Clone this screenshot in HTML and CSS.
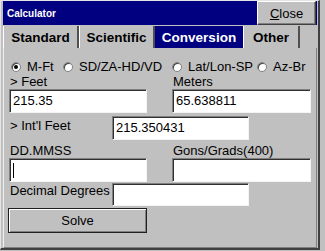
FILE: index.html
```html
<!doctype html>
<html lang="en">
	<head>
		<meta charset="UTF-8">
		<title>Calculator</title>
		<link rel="stylesheet" href="styles.css">
	</head>

	<body>
		<div class="window">
			<div class="titlebar">
				<span class="title">Calculator</span>
				<button class="close"><u>C</u>lose</button>
			</div>

			<div class="tabs">
				<div class="tab">Standard</div>
				<div class="tab">Scientific</div>
				<div class="tab active">Conversion</div>
				<div class="tab last">Other</div>
			</div>

			<div class="panel">
				<div class="radios">
					<label class="radio"><span class="dot checked"></span>M-Ft</label>
					<label class="radio"><span class="dot"></span>SD/ZA-HD/VD</label>
					<label class="radio"><span class="dot"></span>Lat/Lon-SP</label>
					<label class="radio"><span class="dot"></span>Az-Br</label>
				</div>

				<div class="pair">
					<div class="field">
						<div class="label">&gt; Feet</div>
						<div class="box">215.35</div>
					</div>
					<div class="field">
						<div class="label">Meters</div>
						<div class="box">65.638811</div>
					</div>
				</div>

				<div class="row intl">
					<span class="label">&gt; Int'l Feet</span>
					<div class="box wide">215.350431</div>
				</div>

				<div class="pair dms">
					<div class="field">
						<div class="label">DD.MMSS</div>
						<div class="box"><span class="caret"></span></div>
					</div>
					<div class="field">
						<div class="label">Gons/Grads(400)</div>
						<div class="box"></div>
					</div>
				</div>

				<div class="row decimal">
					<span class="label">Decimal Degrees</span>
					<div class="box wide"></div>
				</div>

				<button class="solve">Solve</button>
			</div>
		</div>
	</body>
</html>
```

FILE: styles.css
```css
* {
	margin: 0;
	padding: 0;
	box-sizing: border-box;
}
body {
	background-color: #c0c0c0;
	color: #000;
	font-family: "Liberation Sans", Arial, sans-serif;
	font-size: 13px;
	line-height: 15px;
}
.window {
	width: 320px;
	height: 250px;
	border-top: 1px solid #e4e4e4;
	border-left: 1px solid #e4e4e4;
	border-right: 2px solid #404040;
	border-bottom: 2px solid #404040;
	padding: 0 1px 0 2px;
}

/* title bar */
.titlebar {
	display: flex;
	align-items: center;
	justify-content: space-between;
	height: 24px;
	background-color: #000080;
	color: #fff;
}
.title {
	font-size: 10px;
	font-weight: bold;
	padding-left: 4px;
}
.close {
	width: 59px;
	height: 24px;
	margin-right: 1px;
	background-color: #c0c0c0;
	font-family: inherit;
	font-size: 13px;
	color: #000;
	border: 1px solid;
	border-color: #fff #404040 #404040 #fff;
	box-shadow: inset -1px -1px 0 #808080;
}

/* tabs */
.tabs {
	display: flex;
	margin-top: 1px;
	height: 22px;
}
.tab {
	display: flex;
	align-items: center;
	justify-content: center;
	width: 76px;
	font-size: 13.5px;
	font-weight: bold;
	border-left: 1px solid #fff;
	border-right: 2px solid #505050;
}
.tab.active {
	width: 88px;
	background-color: #000080;
	color: #fff;
	border: none;
}
.tab.last {
	width: 57px;
}

/* conversion panel */
.panel {
	height: 200px;
	border-left: 1px solid #f0f0f0;
	border-right: 1px solid #808080;
	border-bottom: 1px solid #808080;
	padding: 11px 0 0 5px;
}
.radios {
	display: grid;
	grid-template-columns: 52px 109px 85px auto;
	padding-left: 2px;
}
.radio {
	display: flex;
	align-items: center;
	gap: 6px;
}
.dot {
	display: flex;
	align-items: center;
	justify-content: center;
	width: 10px;
	height: 10px;
	border-radius: 50%;
	background-color: #fff;
	border: 1px solid #808080;
	box-shadow: inset 1px 1px 0 #404040;
}
.dot.checked::after {
	content: "";
	width: 4px;
	height: 4px;
	border-radius: 50%;
	background-color: #000;
}
.pair {
	display: grid;
	grid-template-columns: 138px 139px;
	column-gap: 25px;
}
.label {
	padding-left: 1px;
}
.box {
	height: 24px;
	line-height: 21px;
	padding-left: 3px;
	background-color: #fff;
	border: 1px solid;
	border-color: #808080 #f4f4f4 #f4f4f4 #808080;
	box-shadow: inset 1px 1px 0 #303030;
}
.box.wide {
	width: 137px;
}
.caret {
	display: inline-block;
	width: 1px;
	height: 15px;
	margin-top: 4px;
	vertical-align: top;
	background-color: #000;
}
.row {
	display: flex;
	align-items: flex-start;
}
.row .label {
	width: 103px;
	padding-top: 2px;
}
.intl {
	margin-top: 3px;
}
.dms {
	margin-top: 4px;
}
.dms .label {
	line-height: 14px;
}
.decimal {
	margin-top: 1px;
}
.decimal .box {
	height: 23px;
}
.decimal .label {
	padding-top: 0;
}
.solve {
	display: block;
	width: 139px;
	height: 25px;
	margin-top: 2px;
	margin-left: -1px;
	background-color: #c0c0c0;
	font-family: inherit;
	font-size: 13px;
	color: #000;
	border: 1px solid #202020;
	box-shadow: inset 1px 1px 0 #fff, inset -1px -1px 0 #808080;
}
```
